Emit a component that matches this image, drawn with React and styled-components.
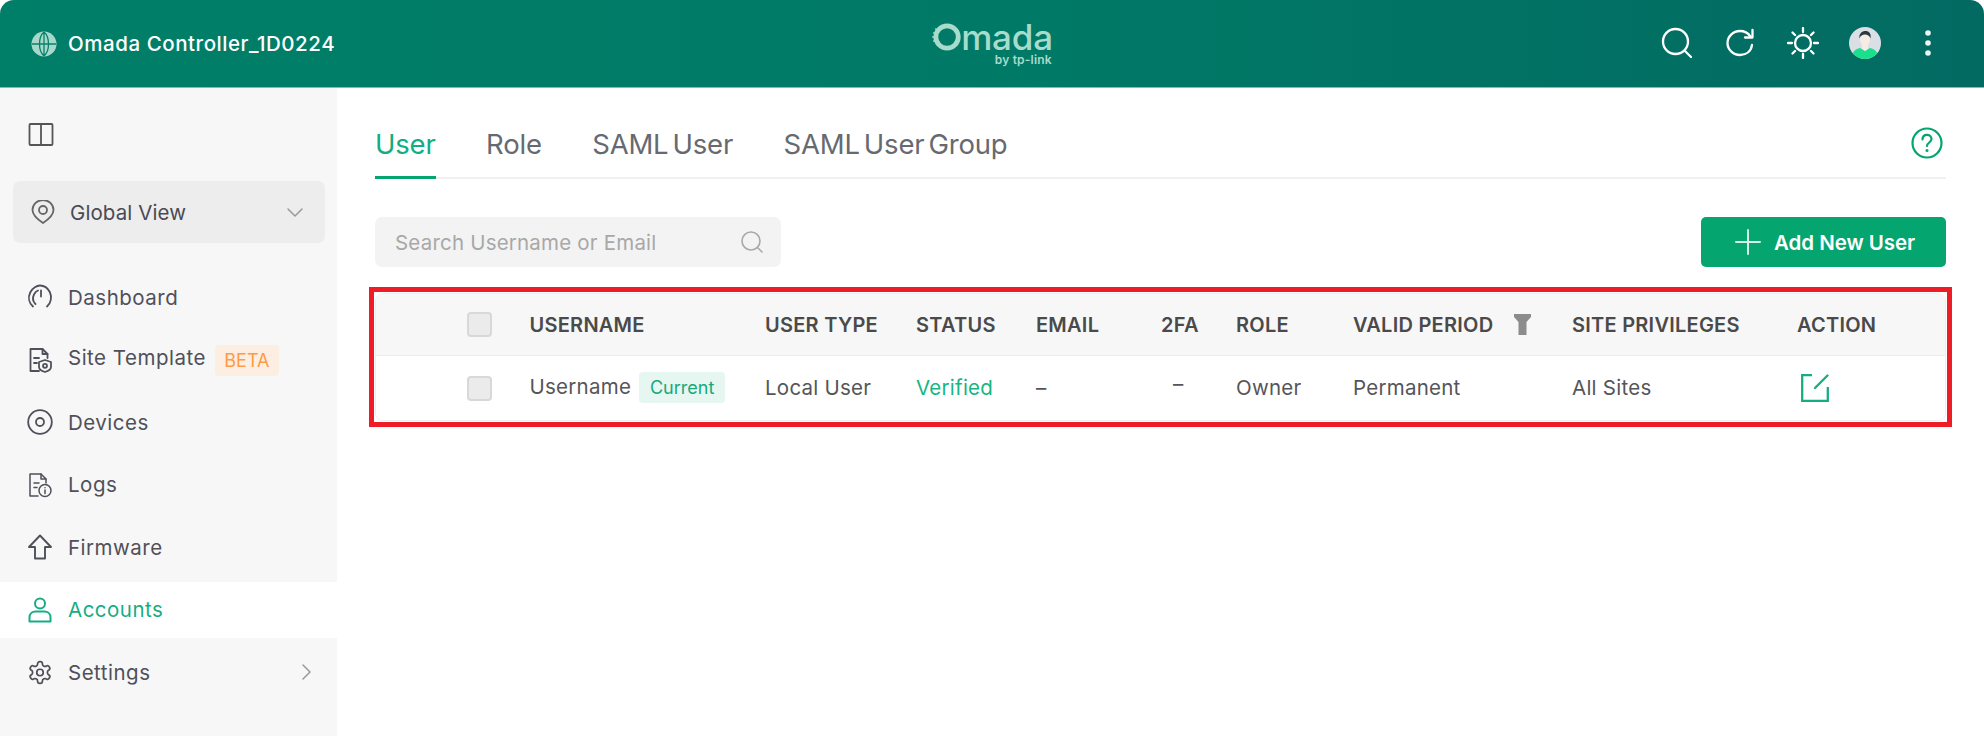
import React from 'react';
import styled, { createGlobalStyle } from 'styled-components';

const Global = createGlobalStyle`
  html, body { margin: 0; padding: 0; background: #fff; }
  body { font-family: Inter, "Noto Sans", sans-serif; color: #4a4a4a; }
  * { box-sizing: border-box; }
`;

const Page = styled.div`
  width: 1984px; height: 736px; display: flex; flex-direction: column; overflow: hidden; background: #fff;
`;
const Header = styled.header`
  height: 88px; flex: none; display: grid; grid-template-columns: 1fr auto 1fr; align-items: center;
  padding: 0 40px 0 31px; border-radius: 14px 14px 0 0;
  border-bottom: 1px solid #7fbfae;
  background: linear-gradient(90deg, #007f68 0%, #007a67 50%, #036a62 100%);
`;
const Brand = styled.div`
  display: flex; align-items: center; justify-self: start; gap: 11px; color: #fff; font-size: 20.5px; font-weight: 500; letter-spacing: .55px;
`;
const Logo = styled.div`
  display: flex; flex-direction: column; align-items: flex-end; color: #a6dccc; margin: -1px 0 0 9px;
`;
const LogoWord = styled.div`
  display: flex; align-items: center; font-size: 35px; font-weight: 500; line-height: 30px; letter-spacing: -.2px;
`;
const LogoSub = styled.div`
  font-size: 12px; font-weight: 600; line-height: 13px; letter-spacing: .2px; margin-right: 1px;
`;
const HeaderIcons = styled.div`
  display: flex; align-items: center; justify-content: flex-end; gap: 30.700px; margin-top: -2px;
`;
const Body = styled.div`
  flex: 1; display: flex; min-height: 0;
`;
const Sidebar = styled.aside`
  width: 337px; flex: none; background: #f7f7f7; display: flex; flex-direction: column;
`;
const Toggle = styled.div`
  height: 93px; flex: none; padding: 34px 0 0 28px; color: #555; line-height: 0;
`;
const SiteSelect = styled.div`
  margin: 0 12px 0 13px; height: 62px; flex: none; border-radius: 7px; background: #ededed;
  display: flex; align-items: center; padding: 0 21px 0 18px; gap: 15px; font-size: 20.5px; letter-spacing: .1px; color: #4a4a55;
`;
const SelectLabel = styled.span` flex: 1; `;
const NavList = styled.nav`
  margin-top: 26px; display: flex; flex-direction: column; gap: 6.500px;
`;
const NavItem = styled.div`
  height: 56px; display: flex; align-items: center; padding: 0 21px 0 27px; gap: 15px;
  font-size: 20.5px; letter-spacing: .5px; color: ${p => (p.$active ? '#17ad82' : '#50505a')};
  background: ${p => (p.$active ? '#fff' : 'transparent')};
`;
const NavIcon = styled.span`
  width: 26px; height: 26px; flex: none; display: flex; align-items: center; justify-content: center;
`;
const NavLabel = styled.span`
  margin-bottom: ${p => (p.$raised ? '4px' : '0')};
`;
const Beta = styled.span`
  margin-left: -6px; height: 31px; width: 64px; display: flex; align-items: center; justify-content: center;
  border-radius: 4px; background: #fdeee2; color: #ff9a45; font-size: 18px; letter-spacing: 0; margin-top: 2px;
`;
const Arrow = styled.span`
  margin-left: auto; line-height: 0; color: #999;
`;
const Main = styled.main`
  flex: 1; min-width: 0; padding: 0 38px;
`;
const TabBar = styled.div`
  height: 91px; display: flex; align-items: flex-end; gap: 50.500px; border-bottom: 2px solid #f0f0f0; position: relative;
`;
const Tab = styled.div`
  font-size: 27.5px; line-height: 34px; padding-bottom: 15px; margin-bottom: -2px; letter-spacing: -.2px; word-spacing: -3.500px;
  color: ${p => (p.$active ? '#12ad82' : '#666a70')};
  border-bottom: 3px solid ${p => (p.$active ? '#04a56f' : 'transparent')};
`;
const HelpIcon = styled.span`
  margin-left: auto; align-self: flex-end; margin-bottom: 18px; margin-right: 3px; line-height: 0;
`;
const Tools = styled.div`
  margin-top: 38px; display: flex; justify-content: space-between;
`;
const Search = styled.div`
  width: 406px; height: 50px; border-radius: 7px; background: #f3f3f3; color: #a8a8a8; font-size: 20.5px; letter-spacing: .2px;
  display: flex; align-items: center; justify-content: space-between; padding: 0 17px 0 20px;
`;
const AddButton = styled.button`
  width: 245px; height: 50px; border: 0; border-radius: 5px; background: #04a56f; color: #fff;
  font-family: inherit; font-size: 20.5px; font-weight: 600; letter-spacing: -.05px; display: flex; align-items: center; gap: 13px; padding: 0 0 0 34px;
`;
const Highlight = styled.div`
  margin: 20px -6px 0; border: 5px solid #ee1c25; padding: 1px;
`;
const Table = styled.div`
  border: 1px solid #eee; border-radius: 8px; overflow: hidden;
`;
const Row = styled.div`
  display: grid; grid-template-columns: 153.500px 235.500px 151px 120px 125px 75px 117px 219px 225px 1fr; align-items: center;
  height: ${p => (p.$head ? '62px' : '64px')};
  background: ${p => (p.$head ? '#f7f7f7' : '#fff')};
  border-bottom: ${p => (p.$head ? '1px solid #ececec' : '0')};
  font-size: ${p => (p.$head ? '20px' : '20.5px')};
  font-weight: ${p => (p.$head ? 600 : 400)};
  letter-spacing: ${p => (p.$head ? '.25px' : '.25px')};
  color: ${p => (p.$head ? '#4a4a4a' : '#55555a')};
`;
const Check = styled.span`
  display: block; width: 25px; height: 25px; margin-left: 91px; border-radius: 4px; background: #ebebeb; border: 2px solid #d8d8d8;
`;
const HeadCell = styled.div`
  display: flex; align-items: center; white-space: nowrap;
`;
const Cell = styled.div`
  display: flex; align-items: center; white-space: nowrap; margin-bottom: 2px;
`;
const NameCell = styled.div`
  display: flex; align-items: center; white-space: nowrap; gap: 8px;
`;
const NameText = styled.span`
  margin-bottom: 4px;
`;
const Badge = styled.span`
  width: 86px; height: 31px; display: flex; align-items: center; justify-content: center; border-radius: 4px;
  background: #e6f6f0; color: #17a97d; font-size: 18px; letter-spacing: 0; margin-bottom: 2px;
`;
const Verified = styled(Cell)` color: #17b583; `;
const RaisedDash = styled(Cell)` padding-left: 12px; margin-bottom: 10px; `;
const FilterCell = styled(HeadCell)` gap: 21px; `;
const EditCell = styled.div` padding-left: 4px; line-height: 0; `;

const Stroke = ({ size = 24, color = 'currentColor', w = 2, vb = 24, children }) => (
  <svg width={size} height={size} viewBox={`0 0 ${vb} ${vb}`} fill="none" stroke={color} strokeWidth={w} strokeLinecap="round" strokeLinejoin="round">{children}</svg>
);

const Globe = () => (
  <svg width="26" height="26" viewBox="0 0 26 26" fill="none">
    <circle cx="13" cy="13" r="12.500" fill="#a7d9cb" />
    <path d="M1 13h24M13 1v24M13 1C7 6 7 20 13 25M13 1c6 5 6 19 0 24" stroke="#0a7f6b" strokeWidth="1.300" />
  </svg>
);
const LogoRing = () => (
  <svg width="30" height="32" viewBox="0 0 28 30" fill="none">
    <circle cx="15" cy="15" r="10.500" stroke="#a6dccc" strokeWidth="4.500" />
    <path d="M2 11l3 1M1 15h3M2 19l3-1M4 7l2 2" stroke="#a6dccc" strokeWidth="1.400" />
  </svg>
);
const Avatar = () => (
  <svg width="32" height="32" viewBox="0 0 32 32">
    <defs><clipPath id="av"><circle cx="16" cy="16" r="16" /></clipPath></defs>
    <g clipPath="url(#av)">
      <rect width="32" height="32" fill="#d9dfe4" />
      <path d="M2 32c0-6 4-10 9-11l5 3 5-3c5 1 9 5 9 11z" fill="#19e08c" />
      <path d="M13 17h6v4.500l-3 2.500-3-2.500z" fill="#f7ece4" />
      <ellipse cx="16" cy="12.500" rx="5" ry="6.500" fill="#f7ece4" />
      <path d="M10.500 11.500c-.8-5 2.500-7.500 6-7.500s6 2.500 5 7.500c-1-3-3-4-5.500-4s-4.500 1-5.500 4z" fill="#2b3a42" />
    </g>
  </svg>
);

const icons = {
  dashboard: (
    <Stroke size={26} vb={26} w={1.800}>
      <path d="M6 22.500C2 19 0.800 13.500 3.200 8.500 5.500 3.800 10 1.500 13 1.500c3.500 0 7.500 2 9.800 6.500 2.400 5 1.200 11-2.800 14.500" />
      <path d="M8.500 20C6 17.500 5.500 13.500 7 10.500 8 8.500 9.500 7 11 6.500" />
      <path d="M14 6.500v6" />
    </Stroke>
  ),
  template: (
    <Stroke size={26} vb={26} w={1.800}>
      <path d="M12 24H3.500V2h12l5 5v4" />
      <path d="M15.500 2v5h5M7 11h5M7 16h3" />
      <path d="M18 13l6 2v5c0 2.500-2.500 4-6 5-3.500-1-6-2.500-6-5v-5z" fill="#f7f7f7" />
      <circle cx="18" cy="18.800" r="2" />
    </Stroke>
  ),
  devices: (
    <Stroke size={26} vb={26} w={1.800}>
      <circle cx="13" cy="13" r="11.800" />
      <circle cx="13" cy="13" r="4" />
    </Stroke>
  ),
  logs: (
    <Stroke size={26} vb={26} w={1.500}>
      <path d="M11 24H3V2h11l5 5v4" />
      <path d="M14 2v5h5M7 11h5M7 15.500h3" />
      <circle cx="18" cy="18.500" r="6" fill="#f7f7f7" />
      <path d="M18 18v3.500M18 15.700v.1" />
    </Stroke>
  ),
  firmware: (
    <Stroke size={26} vb={26} w={1.900}>
      <path d="M13 1.500L2 13h6v11.500h10V13h6z" />
    </Stroke>
  ),
  accounts: (
    <Stroke size={26} vb={26} w={2} color="#17ad82">
      <circle cx="13" cy="6.500" r="5" />
      <path d="M2.500 24.500v-4c0-4 3-6 6-6h9c3 0 6 2 6 6v4z" />
    </Stroke>
  ),
  settings: (
    <Stroke size={29} w={1.600}>
      <path d="M12.220 2h-.44a2 2 0 0 0-2 2v.18a2 2 0 0 1-1 1.730l-.43.250a2 2 0 0 1-2 0l-.15-.080a2 2 0 0 0-2.730.730l-.22.380a2 2 0 0 0 .730 2.730l.15.100a2 2 0 0 1 1 1.720v.510a2 2 0 0 1-1 1.740l-.15.090a2 2 0 0 0-.730 2.730l.22.380a2 2 0 0 0 2.730.730l.15-.080a2 2 0 0 1 2 0l.43.250a2 2 0 0 1 1 1.730V20a2 2 0 0 0 2 2h.44a2 2 0 0 0 2-2v-.18a2 2 0 0 1 1-1.730l.43-.250a2 2 0 0 1 2 0l.15.080a2 2 0 0 0 2.730-.730l.22-.390a2 2 0 0 0-.730-2.730l-.15-.080a2 2 0 0 1-1-1.740v-.5a2 2 0 0 1 1-1.740l.15-.090a2 2 0 0 0 .730-2.730l-.22-.380a2 2 0 0 0-2.730-.730l-.15.080a2 2 0 0 1-2 0l-.43-.250a2 2 0 0 1-1-1.730V4a2 2 0 0 0-2-2z" />
      <circle cx="12" cy="12" r="3" />
    </Stroke>
  ),
};

const nav = [
  ['dashboard', 'Dashboard'],
  ['template', 'Site Template'],
  ['devices', 'Devices'],
  ['logs', 'Logs'],
  ['firmware', 'Firmware'],
  ['accounts', 'Accounts'],
  ['settings', 'Settings'],
];

export default function App() {
  return (
    <Page>
      <Global />
      <Header>
        <Brand><Globe /><span>Omada Controller_1D0224</span></Brand>
        <Logo>
          <LogoWord><LogoRing />mada</LogoWord>
          <LogoSub>by tp-link</LogoSub>
        </Logo>
        <HeaderIcons>
          <Stroke size={32} vb={32} color="#fff" w={2.300}>
            <circle cx="14.500" cy="14.500" r="12.500" /><path d="M24 24l6 6" />
          </Stroke>
          <Stroke size={32} vb={32} color="#fff" w={2.300}>
            <path d="M28 18c-1 6.500-6 10-12 10C9 28 3.500 22.500 3.500 16S9 4 16 4c4.500 0 8 2 10.500 5.500" /><path d="M28.500 3v7.500H21" />
          </Stroke>
          <Stroke size={32} vb={32} color="#fff" w={2.300}>
            <circle cx="16" cy="16" r="8" /><path d="M16 1v4M16 27v4M1 16h4M27 16h4M5.500 5.500l2.500 2.500M24 24l2.500 2.500M5.500 26.500L8 24M24 8l2.500-2.500" />
          </Stroke>
          <Avatar />
          <svg width="32" height="32" viewBox="0 0 32 32" fill="#eef6f4"><circle cx="16" cy="6" r="2.800" /><circle cx="16" cy="16" r="2.800" /><circle cx="16" cy="26" r="2.800" /></svg>
        </HeaderIcons>
      </Header>
      <Body>
        <Sidebar>
          <Toggle>
            <Stroke size={26} vb={26} w={1.800}>
              <rect x="1.500" y="2" width="23" height="21" rx="1" /><path d="M13 2v21" />
            </Stroke>
          </Toggle>
          <SiteSelect>
            <Stroke size={24} vb={24} w={1.800} color="#666">
              <path d="M12 23C6 19 1.500 15 1.500 10a10.500 10 0 0 1 21 0c0 5-4.500 9-10.500 13z" /><circle cx="12" cy="10" r="4" />
            </Stroke>
            <SelectLabel>Global View</SelectLabel>
            <Stroke size={18} vb={18} w={1.500} color="#999"><path d="M2 6l7 7 7-7" /></Stroke>
          </SiteSelect>
          <NavList>
            {nav.map(([key, label]) => (
              <NavItem key={key} $active={key === 'accounts'}>
                <NavIcon>{icons[key]}</NavIcon>
                <NavLabel $raised={key === 'template'}>{label}</NavLabel>
                {key === 'template' && <Beta>BETA</Beta>}
                {key === 'settings' && <Arrow><Stroke size={18} vb={18} w={1.500} color="#999"><path d="M5 2l7 7-7 7" /></Stroke></Arrow>}
              </NavItem>
            ))}
          </NavList>
        </Sidebar>
        <Main>
          <TabBar>
            <Tab $active>User</Tab>
            <Tab>Role</Tab>
            <Tab>SAML User</Tab>
            <Tab>SAML User Group</Tab>
            <HelpIcon>
              <Stroke size={32} vb={32} color="#04a56f" w={2.200}>
                <circle cx="16" cy="16" r="14.500" /><path d="M11.500 12.500c0-3 2-4.700 4.500-4.700s4.500 1.700 4.500 4.200c0 3.500-4.500 3.500-4.500 7" /><path d="M16 23.500v.1" strokeWidth="3" />
              </Stroke>
            </HelpIcon>
          </TabBar>
          <Tools>
            <Search>
              <span>Search Username or Email</span>
              <Stroke size={24} vb={24} color="#a8a8a8" w={1.600}>
                <circle cx="11" cy="11" r="9" /><path d="M18 18l4 4" />
              </Stroke>
            </Search>
            <AddButton>
              <Stroke size={26} vb={26} color="#d6f2e7" w={2}><path d="M13 1v24M1 13h24" /></Stroke>
              Add New User
            </AddButton>
          </Tools>
          <Highlight>
            <Table>
              <Row $head>
                <Check />
                <HeadCell>USERNAME</HeadCell>
                <HeadCell>USER TYPE</HeadCell>
                <HeadCell>STATUS</HeadCell>
                <HeadCell>EMAIL</HeadCell>
                <HeadCell>2FA</HeadCell>
                <HeadCell>ROLE</HeadCell>
                <FilterCell><span>VALID PERIOD</span>
                  <svg width="17" height="21" viewBox="0 0 17 21" fill="#8c8c8c"><path d="M0 0h17v3l-4.500 5v13h-8V8L0 3z" /></svg>
                </FilterCell>
                <HeadCell>SITE PRIVILEGES</HeadCell>
                <HeadCell>ACTION</HeadCell>
              </Row>
              <Row>
                <Check />
                <NameCell><NameText>Username</NameText><Badge>Current</Badge></NameCell>
                <Cell>Local User</Cell>
                <Verified>Verified</Verified>
                <Cell>–</Cell>
                <RaisedDash>–</RaisedDash>
                <Cell>Owner</Cell>
                <Cell>Permanent</Cell>
                <Cell>All Sites</Cell>
                <EditCell>
                  <svg width="28" height="28" viewBox="0 0 28 28" fill="none" stroke="#17ad82" strokeWidth="2.300">
                    <path d="M11 1.200H1.200v25.600h25.600V13" /><path d="M26.500 1.500L14 14" strokeLinecap="round" />
                  </svg>
                </EditCell>
              </Row>
            </Table>
          </Highlight>
        </Main>
      </Body>
    </Page>
  );
}
